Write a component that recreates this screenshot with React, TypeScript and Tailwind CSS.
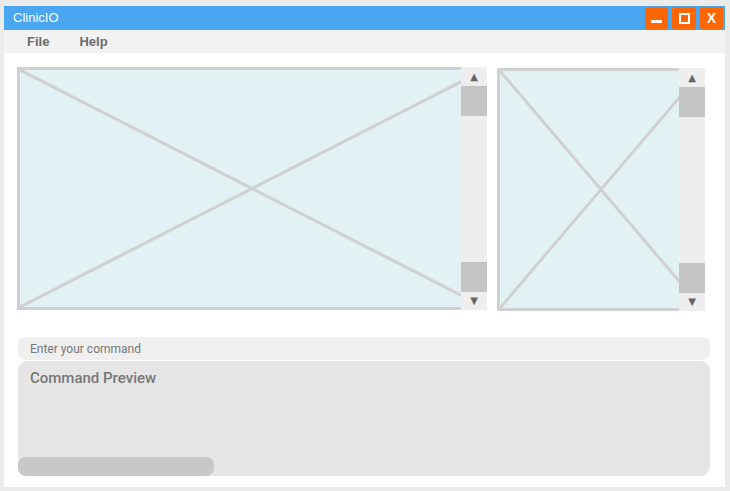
import React from "react";

function Placeholder() {
  return (
    <div className="absolute inset-0 bg-[#e2f1f4] border-[3px] border-[#d0d0d0]">
      <svg className="absolute inset-0 w-full h-full" preserveAspectRatio="none" viewBox="0 0 100 100">
        <line x1="0" y1="0" x2="100" y2="100" stroke="#d0d0d0" strokeWidth="3" vectorEffect="non-scaling-stroke" />
        <line x1="100" y1="0" x2="0" y2="100" stroke="#d0d0d0" strokeWidth="3" vectorEffect="non-scaling-stroke" />
      </svg>
    </div>
  );
}

function VScroll() {
  return (
    <div className="absolute right-0 top-0 w-[26px] h-full bg-[#eeeeee] flex flex-col">
      <div className="h-[19px] flex items-center justify-center text-[#666] text-[10px] leading-none" style={{ fontFamily: "'DejaVu Sans', sans-serif" }}>▲</div>
      <div className="h-[30px] bg-[#c4c4c4]" />
      <div className="flex-1" />
      <div className="h-[30px] bg-[#c4c4c4]" />
      <div className="h-[18px] flex items-center justify-center text-[#666] text-[10px] leading-none" style={{ fontFamily: "'DejaVu Sans', sans-serif" }}>▼</div>
    </div>
  );
}

export default function App() {
  return (
    <div className="w-[730px] h-[491px] bg-[#ebebeb] pt-[6px] pl-[4px] font-['Roboto',sans-serif]">
      <div className="w-[721px] h-[481px] bg-white flex flex-col">
        <div className="h-[24px] bg-[#4aa6f0] flex items-center pl-[9px] pr-[2px]">
          <span className="text-white text-[13px] font-['Liberation_Sans',sans-serif]">ClinicIO</span>
          <div className="ml-auto flex gap-[4px]">
            <div className="w-[23px] h-[22px] bg-[#ff6600] rounded-[2px] flex items-end justify-center pb-[6px]">
              <div className="w-[11px] h-[3px] bg-white" />
            </div>
            <div className="w-[24px] h-[22px] bg-[#ff6600] rounded-[2px] flex items-center justify-center">
              <div className="w-[11px] h-[11px] border-[2px] border-white" />
            </div>
            <div className="w-[23px] h-[22px] bg-[#ff6600] rounded-[2px] flex items-center justify-center text-white font-bold text-[14px] font-['Liberation_Sans',sans-serif]">
              X
            </div>
          </div>
        </div>
        <div className="h-[23px] bg-[#f2f2f2] flex items-center gap-[30px] pl-[23px] text-[13px] font-bold text-[#6b6b6b] font-['Liberation_Sans',sans-serif]">
          <span>File</span>
          <span>Help</span>
        </div>
        <div className="flex-1 pl-[13px] pt-[14px]">
          <div className="flex items-start gap-[10px]">
            <div className="relative w-[470px] h-[243px]">
              <Placeholder />
              <VScroll />
            </div>
            <div className="relative w-[208px] h-[243px] mt-[1px]">
              <Placeholder />
              <VScroll />
            </div>
          </div>
          <div className="ml-[1px] mt-[26px] w-[692px] h-[23px] bg-[#efefef] rounded-[7px] flex items-center pl-[12px] text-[12px] text-[#777]">
            Enter your command
          </div>
          <div className="ml-[1px] mt-[1px] w-[692px] h-[115px] bg-[#e5e5e5] rounded-[9px] flex flex-col">
            <div className="pl-[12px] pt-[6px] text-[15px] font-medium text-[#777]">Command Preview</div>
            <div className="mt-auto w-[196px] h-[19px] bg-[#c9c8c8] rounded-[8px]" />
          </div>
        </div>
      </div>
    </div>
  );
}
